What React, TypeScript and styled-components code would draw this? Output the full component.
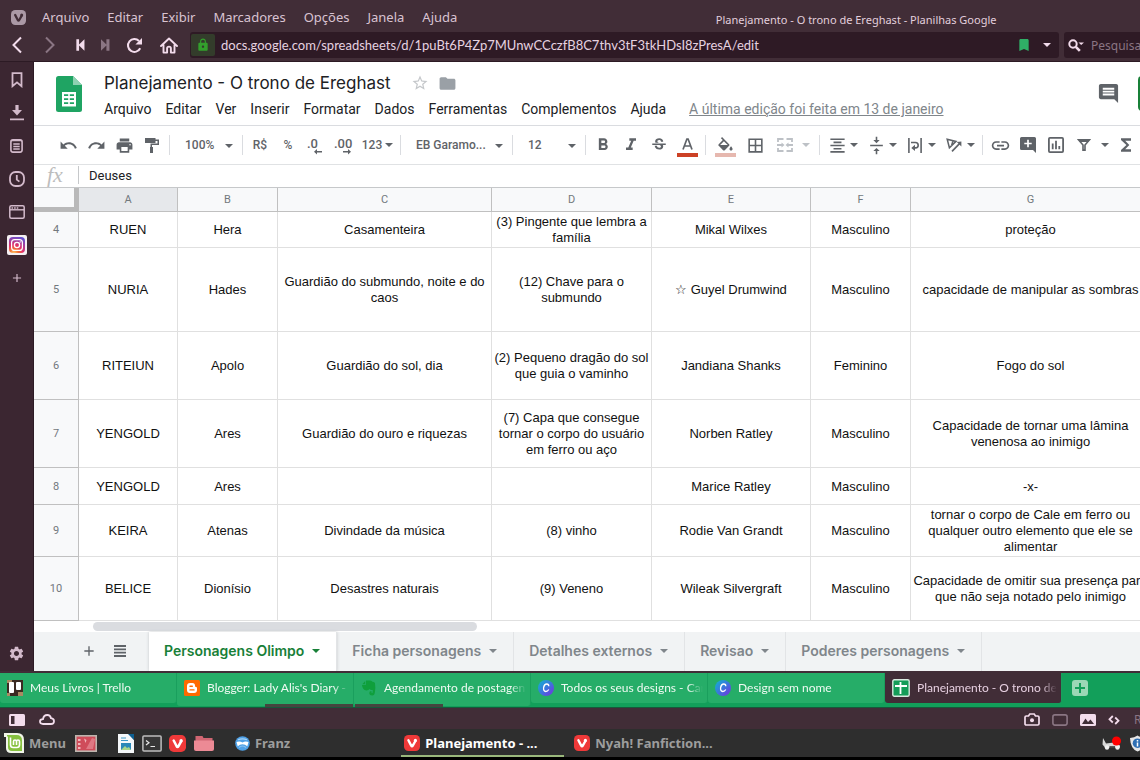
import React from "react";
import styled, { createGlobalStyle, css } from "styled-components";
import {
  MdUndo,
  MdRedo,
  MdPrint,
  MdFormatBold,
  MdFormatItalic,
  MdStrikethroughS,
  MdFormatColorFill,
  MdBorderAll,
  MdFormatAlignCenter,
  MdVerticalAlignCenter,
  MdLink,
  MdComment,
  MdFolder,
  MdStarBorder,
  MdFunctions,
  MdLock,
  MdBookmark,
  MdAdd,
  MdSettings,
} from "react-icons/md";

const ui = `"Noto Sans", "Open Sans", sans-serif`;
const uiNarrow = `Lato, "Open Sans", sans-serif`;
const roboto = `Roboto, "Liberation Sans", sans-serif`;
const arial = `"Liberation Sans", Arial, sans-serif`;

const GlobalStyle = createGlobalStyle`
  * { box-sizing: border-box; }
  body { margin: 0; background: #000; }
  button, input, select { font: inherit; color: inherit; border: 0; background: none; padding: 0; margin: 0; }
  svg { display: block; flex: none; }
`;

const Page = styled.div`
  min-height: 100vh;
  display: flex;
  flex-direction: column;
  overflow: hidden;
  background: #412d37;
  font-family: ${ui};
`;

/* ---------- browser chrome ---------- */

const TitleBar = styled.header`
  display: flex;
  align-items: center;
  height: 31px;
  padding: 3px 0 0 11px;
  color: #d9c3d2;
  white-space: nowrap;
`;

const BrowserMenu = styled.nav`
  display: flex;
  margin-left: 7px;
`;

const BrowserMenuItem = styled.button`
  padding: 0 9px;
  font-size: 13px;
  line-height: 20px;
`;

const WindowTitle = styled.div`
  flex: 1;
  padding: 6px 0 0 106px;
  text-align: center;
  font-size: 11px;
  line-height: 16px;
  color: #e3cfdd;
`;

const AddressBar = styled.div`
  display: flex;
  align-items: center;
  height: 31px;
  padding-bottom: 2px;
  border-bottom: 1px solid #2c1a24;
  color: #f3dcec;
  overflow: hidden;
`;

const NavButton = styled.button<{ $w: number; $dim?: boolean }>`
  display: flex;
  justify-content: center;
  flex: none;
  width: ${(p) => p.$w}px;
  color: ${(p) => (p.$dim ? "#8a7583" : "#f3dcec")};
`;

const UrlField = styled.div`
  display: flex;
  align-items: center;
  flex: 1;
  height: 26px;
  margin-left: 4px;
  padding: 1px;
  border-radius: 3px;
  background: #2e1a25;
`;

const Secure = styled.span`
  display: flex;
  align-items: center;
  justify-content: center;
  width: 24px;
  height: 22px;
  border-radius: 2px;
  background: #333c2b;
  color: #33a02c;
`;

const UrlInput = styled.input`
  flex: 1;
  min-width: 0;
  padding-left: 6px;
  font: 13px/20px ${uiNarrow};
  color: #e6d2e0;
`;

const UrlTool = styled.button<{ $color?: string }>`
  display: flex;
  justify-content: center;
  width: 23px;
  color: ${(p) => p.$color ?? "inherit"};
`;

const SearchField = styled.label`
  display: flex;
  align-items: center;
  flex: none;
  gap: 7px;
  width: 150px;
  height: 26px;
  margin: 0 -74px 0 5px;
  padding-left: 4px;
  border-radius: 3px;
  background: #2e1a25;
`;

const SearchInput = styled.input`
  width: 100px;
  font-size: 12px;
  &::placeholder {
    color: #8a7583;
    opacity: 1;
  }
`;

const Body = styled.div`
  display: flex;
  flex: 1;
`;

const SidePanel = styled.aside`
  display: flex;
  flex-direction: column;
  flex: none;
  width: 34px;
  padding: 1px 0;
  background: #3b2631;
  border-right: 1px solid #2c1a24;
`;

const PanelButton = styled.button<{ $last?: boolean }>`
  display: flex;
  align-items: center;
  justify-content: center;
  height: 33px;
  color: #d3bacb;
  ${(p) => p.$last && css`margin-top: auto;`}
`;

/* ---------- document ---------- */

const Doc = styled.main`
  display: flex;
  flex-direction: column;
  flex: 1;
  min-width: 0;
  overflow: hidden;
  background: #fff;
  font-family: ${roboto};
`;

const DocHeader = styled.header`
  display: flex;
  height: 64px;
  padding: 14px 0 0 22px;
  border-bottom: 1px solid #dadce0;
`;

const DocInfo = styled.div`
  flex: 1;
  margin: -6px 0 0 15px;
`;

const TitleRow = styled.div`
  display: flex;
  align-items: center;
  height: 26px;
  padding-left: 7px;
`;

const DocTitle = styled.h1`
  margin: 0;
  font: 400 17px/26px Inter, ${roboto};
  color: #202124;
  white-space: nowrap;
`;

const TitleTool = styled.button<{ $gap: number; $color: string }>`
  margin-left: ${(p) => p.$gap}px;
  color: ${(p) => p.$color};
`;

const DocMenu = styled.nav`
  display: flex;
  align-items: center;
  height: 26px;
  font-size: 14px;
  line-height: 20px;
  color: #202124;
  white-space: nowrap;
`;

const DocMenuItem = styled.button`
  padding: 0 7px;
`;

const LastEdit = styled.a`
  margin-left: 16px;
  color: #80868b;
`;

const CommentButton = styled.button`
  width: 22px;
  height: 34px;
  color: #5f6368;
`;

const ShareButton = styled.button`
  width: 110px;
  height: 35px;
  margin: 0 -108px 0 19px;
  border-radius: 4px;
  background: #188038;
`;

const Toolbar = styled.div`
  display: flex;
  align-items: center;
  height: 39px;
  padding-left: 20px;
  border-bottom: 1px solid #e0e2e4;
  color: #5f6368;
  font-size: 12px;
  font-weight: 500;
  overflow: hidden;
`;

const Tool = styled.button<{ $w?: number; $color?: string }>`
  display: flex;
  flex: none;
  align-items: center;
  justify-content: center;
  width: ${(p) => p.$w ?? 28}px;
  height: 28px;
  color: ${(p) => p.$color ?? "#5f6368"};
  white-space: nowrap;
`;

const SplitTool = styled.button<{ $icon?: number; $pad?: number; $color?: string }>`
  display: flex;
  flex: none;
  align-items: center;
  padding: 0 ${(p) => p.$pad ?? 2}px 0 ${(p) => (p.$icon ? 0 : 3)}px;
  color: ${(p) => p.$color ?? "#5f6368"};
  & > span {
    display: flex;
    justify-content: center;
    width: ${(p) => p.$icon ?? 22}px;
  }
  & > svg {
    width: 12px;
  }
`;

const Sep = styled.span<{ $m?: number }>`
  flex: none;
  width: 1px;
  height: 20px;
  margin: 0 ${(p) => p.$m ?? 3}px;
  background: #dadce0;
`;

const Picker = styled.label<{ $w: number }>`
  position: relative;
  flex: none;
  width: ${(p) => p.$w}px;
  & > select {
    appearance: none;
    width: 100%;
    height: 28px;
    padding-left: 12px;
  }
  & > svg {
    position: absolute;
    right: 6px;
    top: 13px;
    pointer-events: none;
  }
`;

const ColorTool = styled(Tool)<{ $bar: string }>`
  flex-direction: column;
  padding-top: 4px;
  & > svg {
    width: 19px;
    height: 16px;
  }
  & > i {
    flex: none;
    width: 21px;
    height: 4px;
    background: ${(p) => p.$bar};
  }
`;

const FormulaBar = styled.label`
  display: flex;
  align-items: center;
  height: 23px;
  padding-bottom: 2px;
  border-bottom: 1px solid #c6c8ca;
`;

const Fx = styled.span`
  width: 44px;
  padding-left: 13px;
  font: italic 22px/20px "Liberation Serif", serif;
  color: #bdbdbd;
`;

const FormulaInput = styled.input`
  flex: 1;
  height: 18px;
  padding-left: 10px;
  border-left: 1px solid #c6c8ca;
  font-size: 13px;
  color: #202124;
`;

const Grid = styled.div`
  flex: 1;
  overflow: hidden;
`;

const Sheet = styled.table`
  width: 100%;
  min-width: 1117px;
  table-layout: fixed;
  border-spacing: 0;
  font: 13px/16px ${arial};
  color: #111;
  text-align: center;
`;

const Corner = styled.td`
  padding: 0;
  background: #f8f9fa;
  border: solid #b9b9b9;
  border-width: 0 5px 5px 0;
`;

const ColHead = styled.th<{ $active?: boolean }>`
  height: 24px;
  padding: 0;
  border: solid #c0c0c0;
  border-width: 0 1px 1px 0;
  background: ${(p) => (p.$active ? "#e6e8eb" : "#f8f9fa")};
  font: 400 11px/16px ${roboto};
  color: #72787d;
`;

const RowHead = styled.th`
  padding: 1px 0 0;
  border: solid #c0c0c0;
  border-width: 0 1px 1px 0;
  background: #f8f9fa;
  font: 400 11px/16px ${roboto};
  color: #72787d;
`;

const Row = styled.tr<{ $h: number }>`
  height: ${(p) => p.$h}px;
`;

const Cell = styled.td`
  padding: 1px 0 0;
  border: solid #e0e0e0;
  border-width: 0 1px 1px 0;
  white-space: pre;
`;

const ScrollTrack = styled.div`
  height: 11px;
  padding: 1px 0 0 59px;
`;

const ScrollThumb = styled.div`
  width: 384px;
  height: 9px;
  border-radius: 5px;
  background: #dadce0;
`;

const SheetBar = styled.nav`
  display: flex;
  height: 39px;
  padding-left: 39px;
  background: #f1f3f4;
  color: #5f6368;
`;

const SheetTool = styled.button`
  display: flex;
  align-items: center;
  justify-content: center;
  width: 31px;
  padding-bottom: 2px;
`;

const SheetTab = styled.button<{ $active?: boolean }>`
  display: flex;
  align-items: center;
  gap: 8px;
  padding: 0 16px 2px 15px;
  border-right: 1px solid #e2e4e6;
  font: 600 14px/20px Inter, ${roboto};
  color: #80868b;
  white-space: nowrap;
  ${(p) =>
    p.$active &&
    css`
      margin-left: 14px;
      background: #fff;
      color: #188038;
      box-shadow: 0 0 3px #c4c7ca;
    `}
`;

/* ---------- browser tabs, status bar, taskbar ---------- */

const TabBar = styled.nav`
  display: flex;
  height: 37px;
  border-top: 2px solid #412d37;
  border-bottom: 1px solid #17583b;
  background: #129f5a;
`;

const TabSlot = styled.div`
  flex: none;
  width: 177px;
`;

const Tab = styled.button<{ $active?: boolean; $stack?: boolean }>`
  display: flex;
  align-items: center;
  gap: 7px;
  width: 177px;
  height: ${(p) => (p.$stack ? 33 : 30)}px;
  padding: 0 4px ${(p) => (p.$stack ? 3 : 0)}px 7px;
  border-right: 1px solid #1a9f5d;
  border-radius: 0 0 3px 3px;
  background: ${(p) => (p.$active ? "#412d37" : "#26ad68")};
  color: ${(p) => (p.$active ? "#e6cfe0" : "#eefaf2")};
`;

const TabLabel = styled.span`
  flex: 1;
  overflow: hidden;
  font: 12px/18px ${uiNarrow};
  text-align: left;
  white-space: nowrap;
  mask-image: linear-gradient(to right, #000 calc(100% - 16px), transparent);
`;

const StackMark = styled.div<{ $side: "left" | "right" }>`
  position: relative;
  width: 88px;
  height: 3px;
  margin: -2px 0 0 ${(p) => (p.$side === "right" ? 88 : 1)}px;
  background: #45453f;
`;

const NewTabButton = styled.button`
  height: 30px;
  padding: 0 10px;
`;

const StatusBar = styled.footer`
  display: flex;
  align-items: center;
  height: 21px;
  padding: 2px 0 0 9px;
  color: #f3dcec;
  overflow: hidden;
`;

const StatusTools = styled.div`
  display: flex;
  align-items: center;
  gap: 12px;
  margin: 0 -50px 0 auto;
  & > span {
    width: 58px;
    padding-left: 2px;
    font-size: 12px;
    line-height: 18px;
    color: #8a7583;
  }
`;

const StatusButton = styled.button<{ $gap?: number }>`
  margin-left: ${(p) => p.$gap ?? 0}px;
`;

const Taskbar = styled.footer`
  display: flex;
  align-items: center;
  height: 31px;
  border-bottom: 3px solid #000;
  background: #2e2e2e;
  color: #9d9d9d;
  font-size: 13px;
  font-weight: 700;
  overflow: hidden;
`;

const Launcher = styled.button<{ $gap: number }>`
  display: flex;
  align-items: center;
  gap: 5px;
  margin-left: ${(p) => p.$gap}px;
  white-space: nowrap;
`;

const WindowButton = styled.button<{ $active?: boolean; $gap?: number }>`
  display: flex;
  align-items: center;
  gap: 5px;
  flex: none;
  width: 163px;
  height: 28px;
  margin-left: ${(p) => p.$gap ?? 0}px;
  padding: 2px 3px 0;
  border-bottom: 2px solid ${(p) => (p.$active ? "#9ab87c" : "transparent")};
  color: ${(p) => (p.$active ? "#fff" : "#9d9d9d")};
  white-space: nowrap;
`;

const Tray = styled.div`
  display: flex;
  align-items: center;
  gap: 8px;
  margin: 0 -6px 0 auto;
`;

/* ---------- drawings ---------- */

const Caret = () => (
  <svg width="8" height="4" viewBox="0 0 8 4">
    <path d="M0 0h8L4 4z" fill="currentColor" />
  </svg>
);

const Vivaldi = ({ size, bg, fg }: { size: number; bg: string; fg: string }) => (
  <svg width={size} height={size} viewBox="0 0 16 16">
    <rect width="16" height="16" rx="4.5" fill={bg} />
    <path d="M4.4 5.2 7.2 10.6q.8 1.400 1.600 0l2.600-4.600" fill="none" stroke={fg} strokeWidth="2.4" strokeLinecap="round" />
    <circle cx="11.4" cy="5.4" r="1.6" fill={fg} />
  </svg>
);

const Chevron = ({ flip }: { flip?: boolean }) => (
  <svg width="12" height="18" viewBox="0 0 12 18">
    <path d={flip ? "M2 1.5 9.5 9 2 16.5" : "M10 1.5 2.5 9 10 16.5"} fill="none" stroke="currentColor" strokeWidth="2" />
  </svg>
);

const Skip = ({ flip }: { flip?: boolean }) => (
  <svg width="9" height="12" viewBox="0 0 10 13">
    <path d={flip ? "M0 0l6 6V0h3.4v13H6V7l-6 6z" : "M.4 0h3v6l6-6v13l-6-6v6h-3z"} fill="currentColor" />
  </svg>
);

const Reload = () => (
  <svg width="17" height="17" viewBox="0 0 17 17">
    <path d="M14.2 11.2A6.4 6.4 0 1 1 13 4" fill="none" stroke="currentColor" strokeWidth="2" />
    <path d="M16 1v6.6H9.4z" fill="currentColor" />
  </svg>
);

const Home = () => (
  <svg width="18" height="17" viewBox="0 0 18 17">
    <path d="M1 9 9 1.5 17 9M3.5 8v7.6h3.6v-4.2q0-1.8 1.9-1.8t1.9 1.8v4.2h3.6V8" fill="none" stroke="currentColor" strokeWidth="1.9" strokeLinejoin="round" strokeLinecap="round" />
  </svg>
);

const SearchGlass = () => (
  <svg width="16" height="13" viewBox="0 0 16 13">
    <circle cx="5" cy="5" r="3.7" fill="none" stroke="currentColor" strokeWidth="2" />
    <path d="m7.8 7.8 4 4" stroke="currentColor" strokeWidth="2.6" />
    <path d="M10.5 3.5H16L13.2 6z" fill="currentColor" />
  </svg>
);

const Bookmark = () => (
  <svg width="12" height="16" viewBox="0 0 12 16">
    <path d="M1.5 1.2h9v13L6 10.4l-4.5 3.8z" fill="none" stroke="currentColor" strokeWidth="1.8" />
  </svg>
);

const Download = () => (
  <svg width="14" height="16" viewBox="0 0 14 16">
    <path d="M5.4 0h3.2v5H12l-5 5.5L2 5h3.4zM0 13.6h14v1.6H0z" fill="currentColor" />
  </svg>
);

const Notes = () => (
  <svg width="13" height="14" viewBox="0 0 13 14">
    <rect x=".9" y=".9" width="11.2" height="12.2" rx="2" fill="none" stroke="currentColor" strokeWidth="1.6" />
    <path d="M1 1.7h11M3.3 5h6.4M3.3 7.5h6.4M3.3 10h6.4" stroke="currentColor" strokeWidth="1.3" />
  </svg>
);

const History = () => (
  <svg width="16" height="16" viewBox="0 0 16 16">
    <rect x="1" y="1" width="14" height="14" rx="5.5" fill="none" stroke="currentColor" strokeWidth="1.8" />
    <path d="M7.8 4v4.6l2.6 2" fill="none" stroke="currentColor" strokeWidth="1.8" />
  </svg>
);

const WindowPanel = () => (
  <svg width="16" height="14" viewBox="0 0 16 14">
    <rect x=".8" y=".8" width="14.4" height="12.4" rx="1.5" fill="none" stroke="currentColor" strokeWidth="1.5" />
    <path d="M1 4.8h14" stroke="currentColor" strokeWidth="1.4" />
    <path d="M2.5 2.9h7" stroke="currentColor" strokeWidth="1.5" strokeDasharray="1.6 1" />
  </svg>
);

const Instagram = () => (
  <svg width="20" height="20" viewBox="0 0 20 20">
    <defs>
      <radialGradient id="insta" cx="30%" cy="105%" r="115%">
        <stop offset="0" stopColor="#fed576" />
        <stop offset=".25" stopColor="#f47133" />
        <stop offset=".5" stopColor="#e1306c" />
        <stop offset="1" stopColor="#5b51d8" />
      </radialGradient>
    </defs>
    <rect width="20" height="20" rx="2" fill="#f5f0f3" />
    <rect x="2" y="2" width="16" height="16" rx="4" fill="url(#insta)" />
    <rect x="4.6" y="4.6" width="10.8" height="10.8" rx="3" fill="none" stroke="#fff" strokeWidth="1.2" />
    <circle cx="10" cy="10" r="2.6" fill="none" stroke="#fff" strokeWidth="1.3" />
    <circle cx="13.2" cy="6.9" r=".7" fill="#fff" />
  </svg>
);

const SheetsLogo = () => (
  <svg width="26" height="36" viewBox="0 0 26 36">
    <path d="M2.5 0H17l9 9v24.5q0 2.5-2.5 2.5h-21Q0 36 0 33.5v-31Q0 0 2.5 0z" fill="#1fa463" />
    <path d="M17 0l9 9h-9z" fill="#8ed1b1" />
    <path d="M6 16h14v14.500H6z" fill="#fff" />
    <path d="M8 18.300h4.200v1.800H8zm5.800 0H18v1.800h-4.200zM8 22.300h4.200v1.800H8zm5.800 0H18v1.800h-4.200zM8 26.300h4.200v1.800H8zm5.800 0H18v1.800h-4.200z" fill="#1fa463" />
  </svg>
);

const PaintRoller = () => (
  <svg width="14" height="15" viewBox="0 0 14 15">
    <path d="M0 0h10.5v1.5H14V7H7v2h1v6H5V9h.5V5.500h7V3h-2v2H0z" fill="currentColor" />
  </svg>
);

const Arrow = ({ flip }: { flip?: boolean }) => (
  <path d={flip ? "M9 16h5v-2l3 2.8-3 2.8v-2H9z" : "M16 16h-5v-2l-3 2.8 3 2.8v-2h5z"} fill="currentColor" />
);

const Decimals = ({ more }: { more?: boolean }) => (
  <svg width="20" height="20" viewBox="0 0 20 20">
    <text x={more ? 0 : 1} y="13" fontSize="13" fontWeight="500" fontFamily={roboto} fill="currentColor">
      {more ? ".00" : ".0"}
    </text>
    <Arrow flip={more} />
  </svg>
);

const MergeCells = () => (
  <svg width="16" height="14" viewBox="0 0 16 14">
    <path d="M6.5 1H1v3M9.5 1H15v3M6.5 13H1v-3M9.5 13H15v-3M0 7h5M16 7h-5" fill="none" stroke="currentColor" strokeWidth="1.8" />
    <path d="M4.5 4.5 7.5 7l-3 2.5zM11.5 4.5 8.5 7l3 2.5z" fill="currentColor" />
  </svg>
);

const WrapText = () => (
  <svg width="14" height="15" viewBox="0 0 14 15">
    <path d="M.9 0v15M13.1 0v15M3 4.5h4.5a2.7 2.7 0 0 1 0 5.4H6.2" fill="none" stroke="currentColor" strokeWidth="1.6" />
    <path d="M7 6.800v6.200L3.300 9.900z" fill="currentColor" />
  </svg>
);

const RotateText = () => (
  <svg width="16" height="14" viewBox="0 0 16 14">
    <path d="M1.2 1.3 10 3.4 3.4 9.8zM5.6 7.4 7 2.8" fill="none" stroke="currentColor" strokeWidth="1.5" />
    <path d="m6 13.4 7.5-7.8" stroke="currentColor" strokeWidth="1.6" />
    <path d="M15.4 3.6v4.8l-4.600-4.400z" fill="currentColor" />
  </svg>
);

const AddComment = () => (
  <svg width="16" height="16" viewBox="0 0 16 16">
    <path d="M1.5 0h13Q16 0 16 1.5V16l-3-3H1.500Q0 13 0 11.500v-10Q0 0 1.500 0z" fill="currentColor" />
    <path d="M8 2.8v7.4M4.3 6.5h7.4" stroke="#fff" strokeWidth="1.7" />
  </svg>
);

const Chart = () => (
  <svg width="16" height="16" viewBox="0 0 16 16">
    <rect x=".9" y=".9" width="14.2" height="14.2" rx="1" fill="none" stroke="currentColor" strokeWidth="1.8" />
    <path d="M4.7 6.5v5.7M8 3.8v8.4M11.3 9v3.2" stroke="currentColor" strokeWidth="1.8" />
  </svg>
);

const Funnel = () => (
  <svg width="14" height="12" viewBox="0 0 14 12">
    <path d="M1.6.9h10.8L8 6v5.1H6V6z" fill="none" stroke="currentColor" strokeWidth="1.6" />
    <path d="M1 0h12l-2 3H3z" fill="currentColor" />
  </svg>
);

const TextColor = () => (
  <svg viewBox="0 0 19 16">
    <path d="M5 12.5 8.9 2h1.2L14 12.5M6.4 9h6.2" fill="none" stroke="currentColor" strokeWidth="1.7" />
  </svg>
);

const ListLines = () => (
  <svg width="12" height="12" viewBox="0 0 12 12">
    <path d="M0 1h12M0 4.3h12M0 7.6h12M0 11h12" stroke="currentColor" strokeWidth="1.8" />
  </svg>
);

const Trello = () => (
  <svg width="16" height="16" viewBox="0 0 16 16">
    <rect width="16" height="16" fill="#3b2a22" />
    <path d="M0 0h5v3H0zM11 12h5v4h-5zM0 13h3v3H0z" fill="#a98a62" />
    <rect x="2" y="2" width="5" height="11" rx="1" fill="#fff" />
    <rect x="9" y="2" width="5" height="8" rx="1" fill="#fff" />
  </svg>
);

const Blogger = () => (
  <svg width="16" height="16" viewBox="0 0 16 16">
    <rect width="16" height="16" rx="1.5" fill="#ff6a00" />
    <path d="M6 3h2.5Q11 3 11 5.5 11 7 12 7q1 0 1 1v2q0 3-3 3H6q-3 0-3-3V6q0-3 3-3z" fill="#fff" />
    <path d="M6 6.2h2.3M6 9.900h4" stroke="#ff6a00" strokeWidth="1.4" strokeLinecap="round" />
  </svg>
);

const Evernote = () => (
  <svg width="16" height="16" viewBox="0 0 16 16">
    <path d="M5 .5h4q2 .3 2.5 1.2 2.3 0 2.5 1.5.8 4.5-.2 9.8-.4 2.5-2.5 2.5-3 0-3-2.5 0-2 2-2 .5 1 .2 1.7.8.5 1.2-.2V10q-2.5.4-3-1Q7 10.8 4.5 10.3 1.5 9.500 1 5h3.200Q5 5 5 4z" fill="#0f9f3c" />
    <path d="M1.300 4.200 4.200 1v3.200z" fill="#0f9f3c" />
  </svg>
);

const Canva = ({ id }: { id: string }) => (
  <svg width="16" height="16" viewBox="0 0 16 16">
    <defs>
      <linearGradient id={id} x1="0" y1="0" x2="1" y2="1">
        <stop offset="0" stopColor="#0fb5cf" />
        <stop offset=".5" stopColor="#3b76dd" />
        <stop offset="1" stopColor="#7a2be0" />
      </linearGradient>
    </defs>
    <circle cx="8" cy="8" r="8" fill={`url(#${id})`} />
    <path d="M10.8 6.2Q10.8 4 8.8 4 6.3 4 5.6 7.5 5.2 11.3 7.8 11.5q1.7 0 3-2" fill="none" stroke="#fff" strokeWidth="1.3" />
  </svg>
);

const SheetsFavicon = () => (
  <svg width="18" height="18" viewBox="0 0 18 18">
    <rect x=".8" y=".8" width="16.4" height="16.4" rx="1.5" fill="#159c58" stroke="#d8e9df" strokeWidth="1.4" />
    <path d="M3 7h12M8.500 3v12" stroke="#fff" strokeWidth="1.8" />
  </svg>
);

const NewTab = () => (
  <svg width="16" height="16" viewBox="0 0 16 16">
    <rect width="16" height="16" rx="3" fill="#9ad8b6" />
    <path d="M8 3v10M3 8h10" stroke="#139f5a" strokeWidth="2" />
  </svg>
);

const PanelToggle = () => (
  <svg width="16" height="12" viewBox="0 0 16 12">
    <rect width="16" height="12" rx="1.5" fill="currentColor" />
    <rect x="2" y="2" width="3.5" height="8" fill="#412d37" />
  </svg>
);

const Cloud = () => (
  <svg width="16" height="11" viewBox="0 0 16 11">
    <path d="M4 10Q1 10 1 7.5 1 5.3 4 5.2 4.6 1 8.3 1q3 0 3.7 3.2 3 .3 3 3Q15 10 12 10z" fill="none" stroke="currentColor" strokeWidth="1.8" />
  </svg>
);

const Camera = () => (
  <svg width="16" height="13" viewBox="0 0 16 13">
    <path d="M2.3 3H4.5L5.8 1h4.4l1.3 2h2.2Q15 3 15 4.3v6.4Q15 12 13.7 12H2.3Q1 12 1 10.7V4.3Q1 3 2.3 3z" fill="none" stroke="currentColor" strokeWidth="1.7" />
    <circle cx="8" cy="7.3" r="2" fill="currentColor" />
  </svg>
);

const Tiling = () => (
  <svg width="16" height="12" viewBox="0 0 16 12">
    <rect x=".9" y=".9" width="14.2" height="10.2" rx="2" fill="none" stroke="#8a7583" strokeWidth="1.6" />
  </svg>
);

const Images = () => (
  <svg width="16" height="12" viewBox="0 0 16 12">
    <rect width="16" height="12" rx="1.5" fill="currentColor" />
    <path d="M2 10 5.5 4.5 8 8l2.5-2.5L14 10z" fill="#412d37" />
  </svg>
);

const Code = () => (
  <svg width="12" height="10" viewBox="0 0 12 10">
    <path d="M4.8 1 1.5 4.3l3.3 3.2M7.2 2.5l3.3 3.2L7.2 9" fill="none" stroke="currentColor" strokeWidth="1.8" />
  </svg>
);

const Mint = () => (
  <svg width="20" height="20" viewBox="0 0 20 20">
    <path d="M0 0h13q7 0 7 7v13H7q-5 0-5-5V4H0z" fill="#f1f6e9" />
    <path d="M3 2h9.5Q18 2 18 7.5V18H8q-4 0-4-4V3.5H3z" fill="#86c13f" />
    <path d="M6.5 4.5v7.3q0 2.7 2.7 2.7h3.6q2.7 0 2.7-2.700V8.600q0-1.600-1.500-1.600t-1.500 1.600V12 8.600Q12.500 7 11 7T9.500 8.600V12" fill="none" stroke="#fff" strokeWidth="1.6" />
  </svg>
);

const Workspace = () => (
  <svg width="22" height="17" viewBox="0 0 22 17">
    <rect x=".8" y=".8" width="20.4" height="15.4" fill="#cf4c5a" stroke="#bdb5ae" strokeWidth="1.6" />
    <path d="M3 4h2.5v2H3zm0 4h2.500v2H3zm0 4h2.500v2H3zM9 3.500l2.500 1.500-1 3z" fill="#f0b6bb" />
    <path d="m17 3-6 11h7l2-10z" fill="#e58b94" opacity=".7" />
  </svg>
);

const WriterDoc = () => (
  <svg width="16" height="19" viewBox="0 0 16 19">
    <path d="M0 0h11l5 6v13H0z" fill="#f4f7f9" />
    <path d="M10 0h6v6z" fill="#0d5f91" />
    <path d="M3 4h5M3 6.5h7" stroke="#3b97c6" strokeWidth="1.2" />
    <rect x="3" y="9" width="10" height="7" fill="#2b88b8" />
    <path d="m3 16 4-4 2 2 2-1 2 3z" fill="#a7d58b" />
  </svg>
);

const Terminal = () => (
  <svg width="20" height="17" viewBox="0 0 20 17">
    <rect x=".9" y=".9" width="18.2" height="15.2" rx="1" fill="#373737" stroke="#bdbdbd" strokeWidth="1.5" />
    <path d="m4 5.5 3 2.3-3 2.3M8.5 11.5h4.5" fill="none" stroke="#e8e8e8" strokeWidth="1.2" />
  </svg>
);

const RedFolder = () => (
  <svg width="20" height="16" viewBox="0 0 20 16">
    <path d="M1.5 1h7l1 2h9v5H1.5z" fill="#cf6672" />
    <path d="M0 5.5h20v8.5q0 2-2 2H2q-2 0-2-2z" fill="#ec8a95" />
  </svg>
);

const FranzIcon = () => (
  <svg width="15" height="15" viewBox="0 0 15 15">
    <circle cx="7.5" cy="7.5" r="7.3" fill="#4ea0e6" />
    <path d="M3 3.8q4.5-2 9 0" fill="none" stroke="#a8d3f5" strokeWidth="1.2" />
    <path d="M1.5 6q3-1.2 6 .4 3-1.6 6-.4l-1.2 4.2-2.3-1.4-2.5-.6-2.5.6-2.3 1.4z" fill="#fff" />
    <path d="M4 11.5q3.5-3 7 0" fill="none" stroke="#8cc4f2" strokeWidth="1.2" />
  </svg>
);

const TrayCar = () => (
  <svg width="19" height="15" viewBox="0 0 19 15">
    <path d="M1 2 4 7.5l8-1 6 3v2H3L.5 8.5z" fill="#d8d8d8" />
    <circle cx="5" cy="11.5" r="2.2" fill="#f2f2f2" />
    <circle cx="15.5" cy="11.5" r="2.2" fill="#f2f2f2" />
    <path d="M7.5 11h5.5" stroke="#2e2e2e" strokeWidth="1.5" />
    <circle cx="14.5" cy="5" r="4.5" fill="#f00" />
  </svg>
);

const TrayShield = () => (
  <svg width="17" height="17" viewBox="0 0 17 17">
    <path d="M8.5.5q3 2 7.500 2.500-.5 11-7.500 13.500Q1.500 14 1 3 5.500 2.500 8.500.5z" fill="#e6e6e6" />
    <circle cx="8.5" cy="8.2" r="4.8" fill="#2f6fb3" />
    <path d="M8.5 5v1.5M8.5 7.5v4" stroke="#fff" strokeWidth="1.5" />
  </svg>
);

/* ---------- data ---------- */

const browserMenu = ["Arquivo", "Editar", "Exibir", "Marcadores", "Opções", "Janela", "Ajuda"];
const docMenu = ["Arquivo", "Editar", "Ver", "Inserir", "Formatar", "Dados", "Ferramentas", "Complementos", "Ajuda"];
const columns = [
  { name: "A", width: 99 },
  { name: "B", width: 100 },
  { name: "C", width: 214 },
  { name: "D", width: 160 },
  { name: "E", width: 159 },
  { name: "F", width: 100 },
  { name: "G", width: undefined },
];
const rows = [
  { n: 4, h: 36, cells: ["RUEN", "Hera", "Casamenteira", "(3) Pingente que lembra a\nfamília", "Mikal Wilxes", "Masculino", "proteção"] },
  { n: 5, h: 84, cells: ["NURIA", "Hades", "Guardião do submundo, noite e do\ncaos", "(12) Chave para o\nsubmundo", "☆ Guyel Drumwind", "Masculino", "capacidade de manipular as sombras"] },
  { n: 6, h: 68, cells: ["RITEIUN", "Apolo", "Guardião do sol, dia", "(2) Pequeno dragão do sol\nque guia o vaminho", "Jandiana Shanks", "Feminino", "Fogo do sol"] },
  { n: 7, h: 68, cells: ["YENGOLD", "Ares", "Guardião do ouro e riquezas", "(7) Capa que consegue\ntornar o corpo do usuário\nem ferro ou aço", "Norben Ratley", "Masculino", "Capacidade de tornar uma lâmina\nvenenosa ao inimigo"] },
  { n: 8, h: 37, cells: ["YENGOLD", "Ares", "", "", "Marice Ratley", "Masculino", "-x-"] },
  { n: 9, h: 52, cells: ["KEIRA", "Atenas", "Divindade da música", "(8) vinho", "Rodie Van Grandt", "Masculino", "tornar o corpo de Cale em ferro ou\nqualquer outro elemento que ele se\nalimentar"] },
  { n: 10, h: 64, cells: ["BELICE", "Dionísio", "Desastres naturais", "(9) Veneno", "Wileak Silvergraft", "Masculino", "Capacidade de omitir sua presença para\nque não seja notado pelo inimigo"] },
];
const sheetTabs = ["Personagens Olimpo", "Ficha personagens", "Detalhes externos", "Revisao", "Poderes personagens"];
const browserTabs: { label: string; icon: React.ReactNode; stack?: "left" | "right"; active?: boolean }[] = [
  { label: "Meus Livros | Trello", icon: <Trello /> },
  { label: "Blogger: Lady Alis's Diary -", icon: <Blogger />, stack: "right" },
  { label: "Agendamento de postagens", icon: <Evernote />, stack: "left" },
  { label: "Todos os seus designs - Canva", icon: <Canva id="canva1" /> },
  { label: "Design sem nome", icon: <Canva id="canva2" /> },
  { label: "Planejamento - O trono de Ereghast", icon: <SheetsFavicon />, active: true },
];

export default function App() {
  return (
    <Page>
      <GlobalStyle />
      <TitleBar>
        <Vivaldi size={15} bg="#ab99a6" fg="#412d37" />
        <BrowserMenu>
          {browserMenu.map((m) => (
            <BrowserMenuItem key={m}>{m}</BrowserMenuItem>
          ))}
        </BrowserMenu>
        <WindowTitle>Planejamento - O trono de Ereghast - Planilhas Google</WindowTitle>
      </TitleBar>
      <AddressBar>
        <NavButton $w={33} aria-label="Voltar"><Chevron /></NavButton>
        <NavButton $w={34} $dim aria-label="Avançar"><Chevron flip /></NavButton>
        <NavButton $w={26} aria-label="Retroceder"><Skip /></NavButton>
        <NavButton $w={25} $dim aria-label="Avanço rápido"><Skip flip /></NavButton>
        <NavButton $w={33} aria-label="Recarregar"><Reload /></NavButton>
        <NavButton $w={35} aria-label="Página inicial"><Home /></NavButton>
        <UrlField>
          <Secure><MdLock size={14} /></Secure>
          <UrlInput aria-label="Endereço" defaultValue="docs.google.com/spreadsheets/d/1puBt6P4Zp7MUnwCCczfB8C7thv3tF3tkHDsI8zPresA/edit" />
          <UrlTool $color="#2fae66" aria-label="Favorito"><MdBookmark size={16} /></UrlTool>
          <UrlTool aria-label="Mostrar histórico"><Caret /></UrlTool>
        </UrlField>
        <SearchField>
          <SearchGlass />
          <SearchInput aria-label="Pesquisar" placeholder="Pesquisar Google" />
        </SearchField>
      </AddressBar>

      <Body>
        <SidePanel>
          <PanelButton aria-label="Favoritos"><Bookmark /></PanelButton>
          <PanelButton aria-label="Downloads"><Download /></PanelButton>
          <PanelButton aria-label="Notas"><Notes /></PanelButton>
          <PanelButton aria-label="Histórico"><History /></PanelButton>
          <PanelButton aria-label="Janelas"><WindowPanel /></PanelButton>
          <PanelButton aria-label="Instagram"><Instagram /></PanelButton>
          <PanelButton aria-label="Adicionar painel"><MdAdd size={14} /></PanelButton>
          <PanelButton $last aria-label="Configurações"><MdSettings size={17} /></PanelButton>
        </SidePanel>

        <Doc>
          <DocHeader>
            <SheetsLogo />
            <DocInfo>
              <TitleRow>
                <DocTitle>Planejamento - O trono de Ereghast</DocTitle>
                <TitleTool $gap={20} $color="#c4c7ca" aria-label="Marcar com estrela"><MdStarBorder size={18} /></TitleTool>
                <TitleTool $gap={9} $color="#9aa0a6" aria-label="Mover"><MdFolder size={19} /></TitleTool>
              </TitleRow>
              <DocMenu>
                {docMenu.map((m) => (
                  <DocMenuItem key={m}>{m}</DocMenuItem>
                ))}
                <LastEdit href="#historico">A última edição foi feita em 13 de janeiro</LastEdit>
              </DocMenu>
            </DocInfo>
            <CommentButton aria-label="Comentários"><MdComment size={23} /></CommentButton>
            <ShareButton aria-label="Compartilhar" />
          </DocHeader>

          <Toolbar>
            <Tool aria-label="Desfazer"><MdUndo size={19} /></Tool>
            <Tool aria-label="Refazer"><MdRedo size={19} /></Tool>
            <Tool aria-label="Imprimir"><MdPrint size={19} /></Tool>
            <Tool aria-label="Pintar formatação"><PaintRoller /></Tool>
            <Sep />
            <Picker $w={66}>
              <select aria-label="Zoom"><option>100%</option></select>
              <Caret />
            </Picker>
            <Sep />
            <Tool>R$</Tool>
            <Tool>%</Tool>
            <Tool aria-label="Menos casas decimais"><Decimals /></Tool>
            <Tool aria-label="Mais casas decimais"><Decimals more /></Tool>
            <SplitTool aria-label="Mais formatos"><span>123</span><Caret /></SplitTool>
            <Sep />
            <Picker $w={105}>
              <select aria-label="Fonte"><option>EB Garamo...</option></select>
              <Caret />
            </Picker>
            <Sep />
            <Picker $w={66}>
              <select aria-label="Tamanho da fonte"><option>12</option></select>
              <Caret />
            </Picker>
            <Sep />
            <Tool aria-label="Negrito"><MdFormatBold size={20} /></Tool>
            <Tool aria-label="Itálico"><MdFormatItalic size={20} /></Tool>
            <Tool aria-label="Tachado"><MdStrikethroughS size={18} /></Tool>
            <ColorTool $bar="#cc4125" aria-label="Cor do texto">
              <TextColor />
              <i />
            </ColorTool>
            <Sep $m={4} />
            <ColorTool $w={30} $bar="#e6b8af" aria-label="Cor de preenchimento">
              <MdFormatColorFill viewBox="0 0 24 20" />
              <i />
            </ColorTool>
            <Tool $w={30} aria-label="Bordas"><MdBorderAll size={19} /></Tool>
            <SplitTool $icon={30} $pad={4} $color="#bdc1c6" aria-label="Mesclar células"><span><MergeCells /></span><Caret /></SplitTool>
            <Sep />
            <SplitTool aria-label="Alinhamento horizontal"><span><MdFormatAlignCenter size={19} /></span><Caret /></SplitTool>
            <SplitTool aria-label="Alinhamento vertical"><span><MdVerticalAlignCenter size={19} /></span><Caret /></SplitTool>
            <SplitTool aria-label="Ajuste de texto"><span><WrapText /></span><Caret /></SplitTool>
            <SplitTool aria-label="Rotação de texto"><span><RotateText /></span><Caret /></SplitTool>
            <Sep />
            <Tool aria-label="Inserir link"><MdLink size={21} /></Tool>
            <Tool aria-label="Inserir comentário"><AddComment /></Tool>
            <Tool aria-label="Inserir gráfico"><Chart /></Tool>
            <Tool aria-label="Filtro"><Funnel /></Tool>
            <Tool $w={14} aria-label="Opções de filtro"><Caret /></Tool>
            <Tool aria-label="Funções"><MdFunctions size={20} /></Tool>
          </Toolbar>

          <FormulaBar>
            <Fx>fx</Fx>
            <FormulaInput aria-label="Fórmula" defaultValue="Deuses" />
          </FormulaBar>

          <Grid>
            <Sheet>
              <colgroup>
                <col width={45} />
                {columns.map((c) => (
                  <col key={c.name} width={c.width} />
                ))}
              </colgroup>
              <thead>
                <tr>
                  <Corner />
                  {columns.map((c) => (
                    <ColHead key={c.name} scope="col" $active={c.name === "A"}>{c.name}</ColHead>
                  ))}
                </tr>
              </thead>
              <tbody>
                {rows.map((r) => (
                  <Row key={r.n} $h={r.h}>
                    <RowHead scope="row">{r.n}</RowHead>
                    {r.cells.map((c, i) => (
                      <Cell key={i}>{c}</Cell>
                    ))}
                  </Row>
                ))}
              </tbody>
            </Sheet>
          </Grid>
          <ScrollTrack><ScrollThumb /></ScrollTrack>

          <SheetBar>
            <SheetTool aria-label="Adicionar página"><MdAdd size={16} /></SheetTool>
            <SheetTool aria-label="Todas as páginas"><ListLines /></SheetTool>
            {sheetTabs.map((t, i) => (
              <SheetTab key={t} $active={i === 0}>
                {t}
                <Caret />
              </SheetTab>
            ))}
          </SheetBar>
        </Doc>
      </Body>

      <TabBar>
        {browserTabs.map((t) => (
          <TabSlot key={t.label}>
            <Tab $active={t.active} $stack={!!t.stack}>
              {t.icon}
              <TabLabel>{t.label}</TabLabel>
            </Tab>
            {t.stack && <StackMark $side={t.stack} />}
          </TabSlot>
        ))}
        <NewTabButton aria-label="Nova aba"><NewTab /></NewTabButton>
      </TabBar>

      <StatusBar>
        <StatusButton aria-label="Alternar painel"><PanelToggle /></StatusButton>
        <StatusButton $gap={14} aria-label="Sincronização"><Cloud /></StatusButton>
        <StatusTools>
          <StatusButton aria-label="Capturar página"><Camera /></StatusButton>
          <StatusButton aria-label="Lado a lado"><Tiling /></StatusButton>
          <StatusButton aria-label="Imagens"><Images /></StatusButton>
          <StatusButton aria-label="Ações de página"><Code /></StatusButton>
          <span>Redefinir</span>
        </StatusTools>
      </StatusBar>

      <Taskbar>
        <Launcher $gap={4}><Mint />Menu</Launcher>
        <Launcher $gap={9} aria-label="Área de trabalho"><Workspace /></Launcher>
        <Launcher $gap={21} aria-label="Writer"><WriterDoc /></Launcher>
        <Launcher $gap={8} aria-label="Terminal"><Terminal /></Launcher>
        <Launcher $gap={7} aria-label="Vivaldi"><Vivaldi size={17} bg="#ef3939" fg="#fff" /></Launcher>
        <Launcher $gap={8} aria-label="Arquivos"><RedFolder /></Launcher>
        <Launcher $gap={21}><FranzIcon />Franz</Launcher>
        <WindowButton $active $gap={111}><Vivaldi size={16} bg="#ef3939" fg="#fff" />Planejamento - ...</WindowButton>
        <WindowButton $gap={7}><Vivaldi size={16} bg="#ef3939" fg="#fff" />Nyah! Fanfiction...</WindowButton>
        <Tray>
          <TrayCar />
          <TrayShield />
        </Tray>
      </Taskbar>
    </Page>
  );
}
